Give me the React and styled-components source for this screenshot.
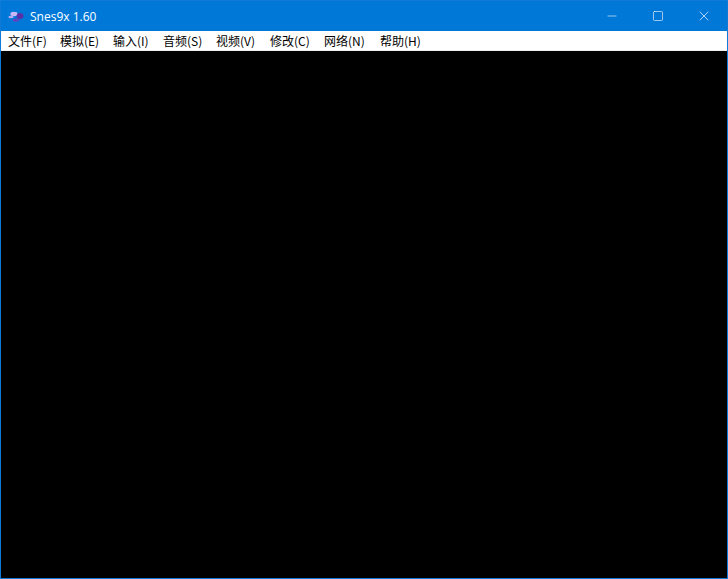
import React from "react";
import styled, { createGlobalStyle } from "styled-components";
import { Minus, Square, X } from "lucide-react";

const GlobalStyle = createGlobalStyle`
  html, body {
    margin: 0;
    padding: 0;
    background: #0078d7;
  }
`;

const Window = styled.div`
  width: 728px;
  height: 579px;
  box-sizing: border-box;
  border: 1px solid #0f7ad8;
  display: flex;
  flex-direction: column;
  overflow: hidden;
  position: relative;
  font-family: "Open Sans", "Noto Sans CJK SC", sans-serif;
`;

const TitleBar = styled.div`
  height: 30px;
  flex: none;
  background: #0078d7;
  display: flex;
  align-items: center;
  color: #fff;
`;

const AppIcon = styled.svg`
  width: 18px;
  height: 14px;
  margin-left: 7px;
`;

const Title = styled.span`
  font-size: 12px;
  margin-left: 4px;
  flex: 1;
`;

const CaptionButton = styled.div`
  width: 46px;
  height: 30px;
  display: flex;
  align-items: center;
  justify-content: center;
`;

const MenuBar = styled.div`
  height: 19px;
  flex: none;
  background: #fff;
  border-bottom: 1px solid #f0f0f0;
  display: flex;
  padding-left: 7px;
`;

const MenuItem = styled.div`
  width: ${(props) => props.$width}px;
  font-size: 12px;
  line-height: 19px;
  color: #000;
  white-space: nowrap;
  font-family: "Noto Sans CJK SC", sans-serif;
`;

const Screen = styled.div`
  flex: 1;
  background: #000;
`;

const menus = [
  ["文件(F)", 52],
  ["模拟(E)", 53],
  ["输入(I)", 50],
  ["音频(S)", 53],
  ["视频(V)", 54],
  ["修改(C)", 54],
  ["网络(N)", 56],
  ["帮助(H)", 56],
];

export default function App() {
  return (
    <>
      <GlobalStyle />
      <Window>
        <TitleBar>
          <AppIcon viewBox="0 0 18 14">
            <ellipse cx="6" cy="5" rx="3.6" ry="2.2" fill="#c9b8f5" />
            <ellipse cx="3" cy="8" rx="2.6" ry="1.2" fill="#b9a6ee" />
            <ellipse cx="12" cy="7" rx="3.4" ry="3" fill="#5b2fa8" />
            <ellipse cx="8" cy="11" rx="3.2" ry="1.6" fill="#6a3fbd" />
          </AppIcon>
          <Title>Snes9x 1.60</Title>
          <CaptionButton>
            <Minus size={14} color="#fff" strokeWidth={1} />
          </CaptionButton>
          <CaptionButton>
            <Square size={12} color="#fff" strokeWidth={1.2} />
          </CaptionButton>
          <CaptionButton>
            <X size={16} color="#fff" strokeWidth={1} />
          </CaptionButton>
        </TitleBar>
        <MenuBar>
          {menus.map(([label, width]) => (
            <MenuItem key={label} $width={width}>
              {label}
            </MenuItem>
          ))}
        </MenuBar>
        <Screen />
      </Window>
    </>
  );
}
